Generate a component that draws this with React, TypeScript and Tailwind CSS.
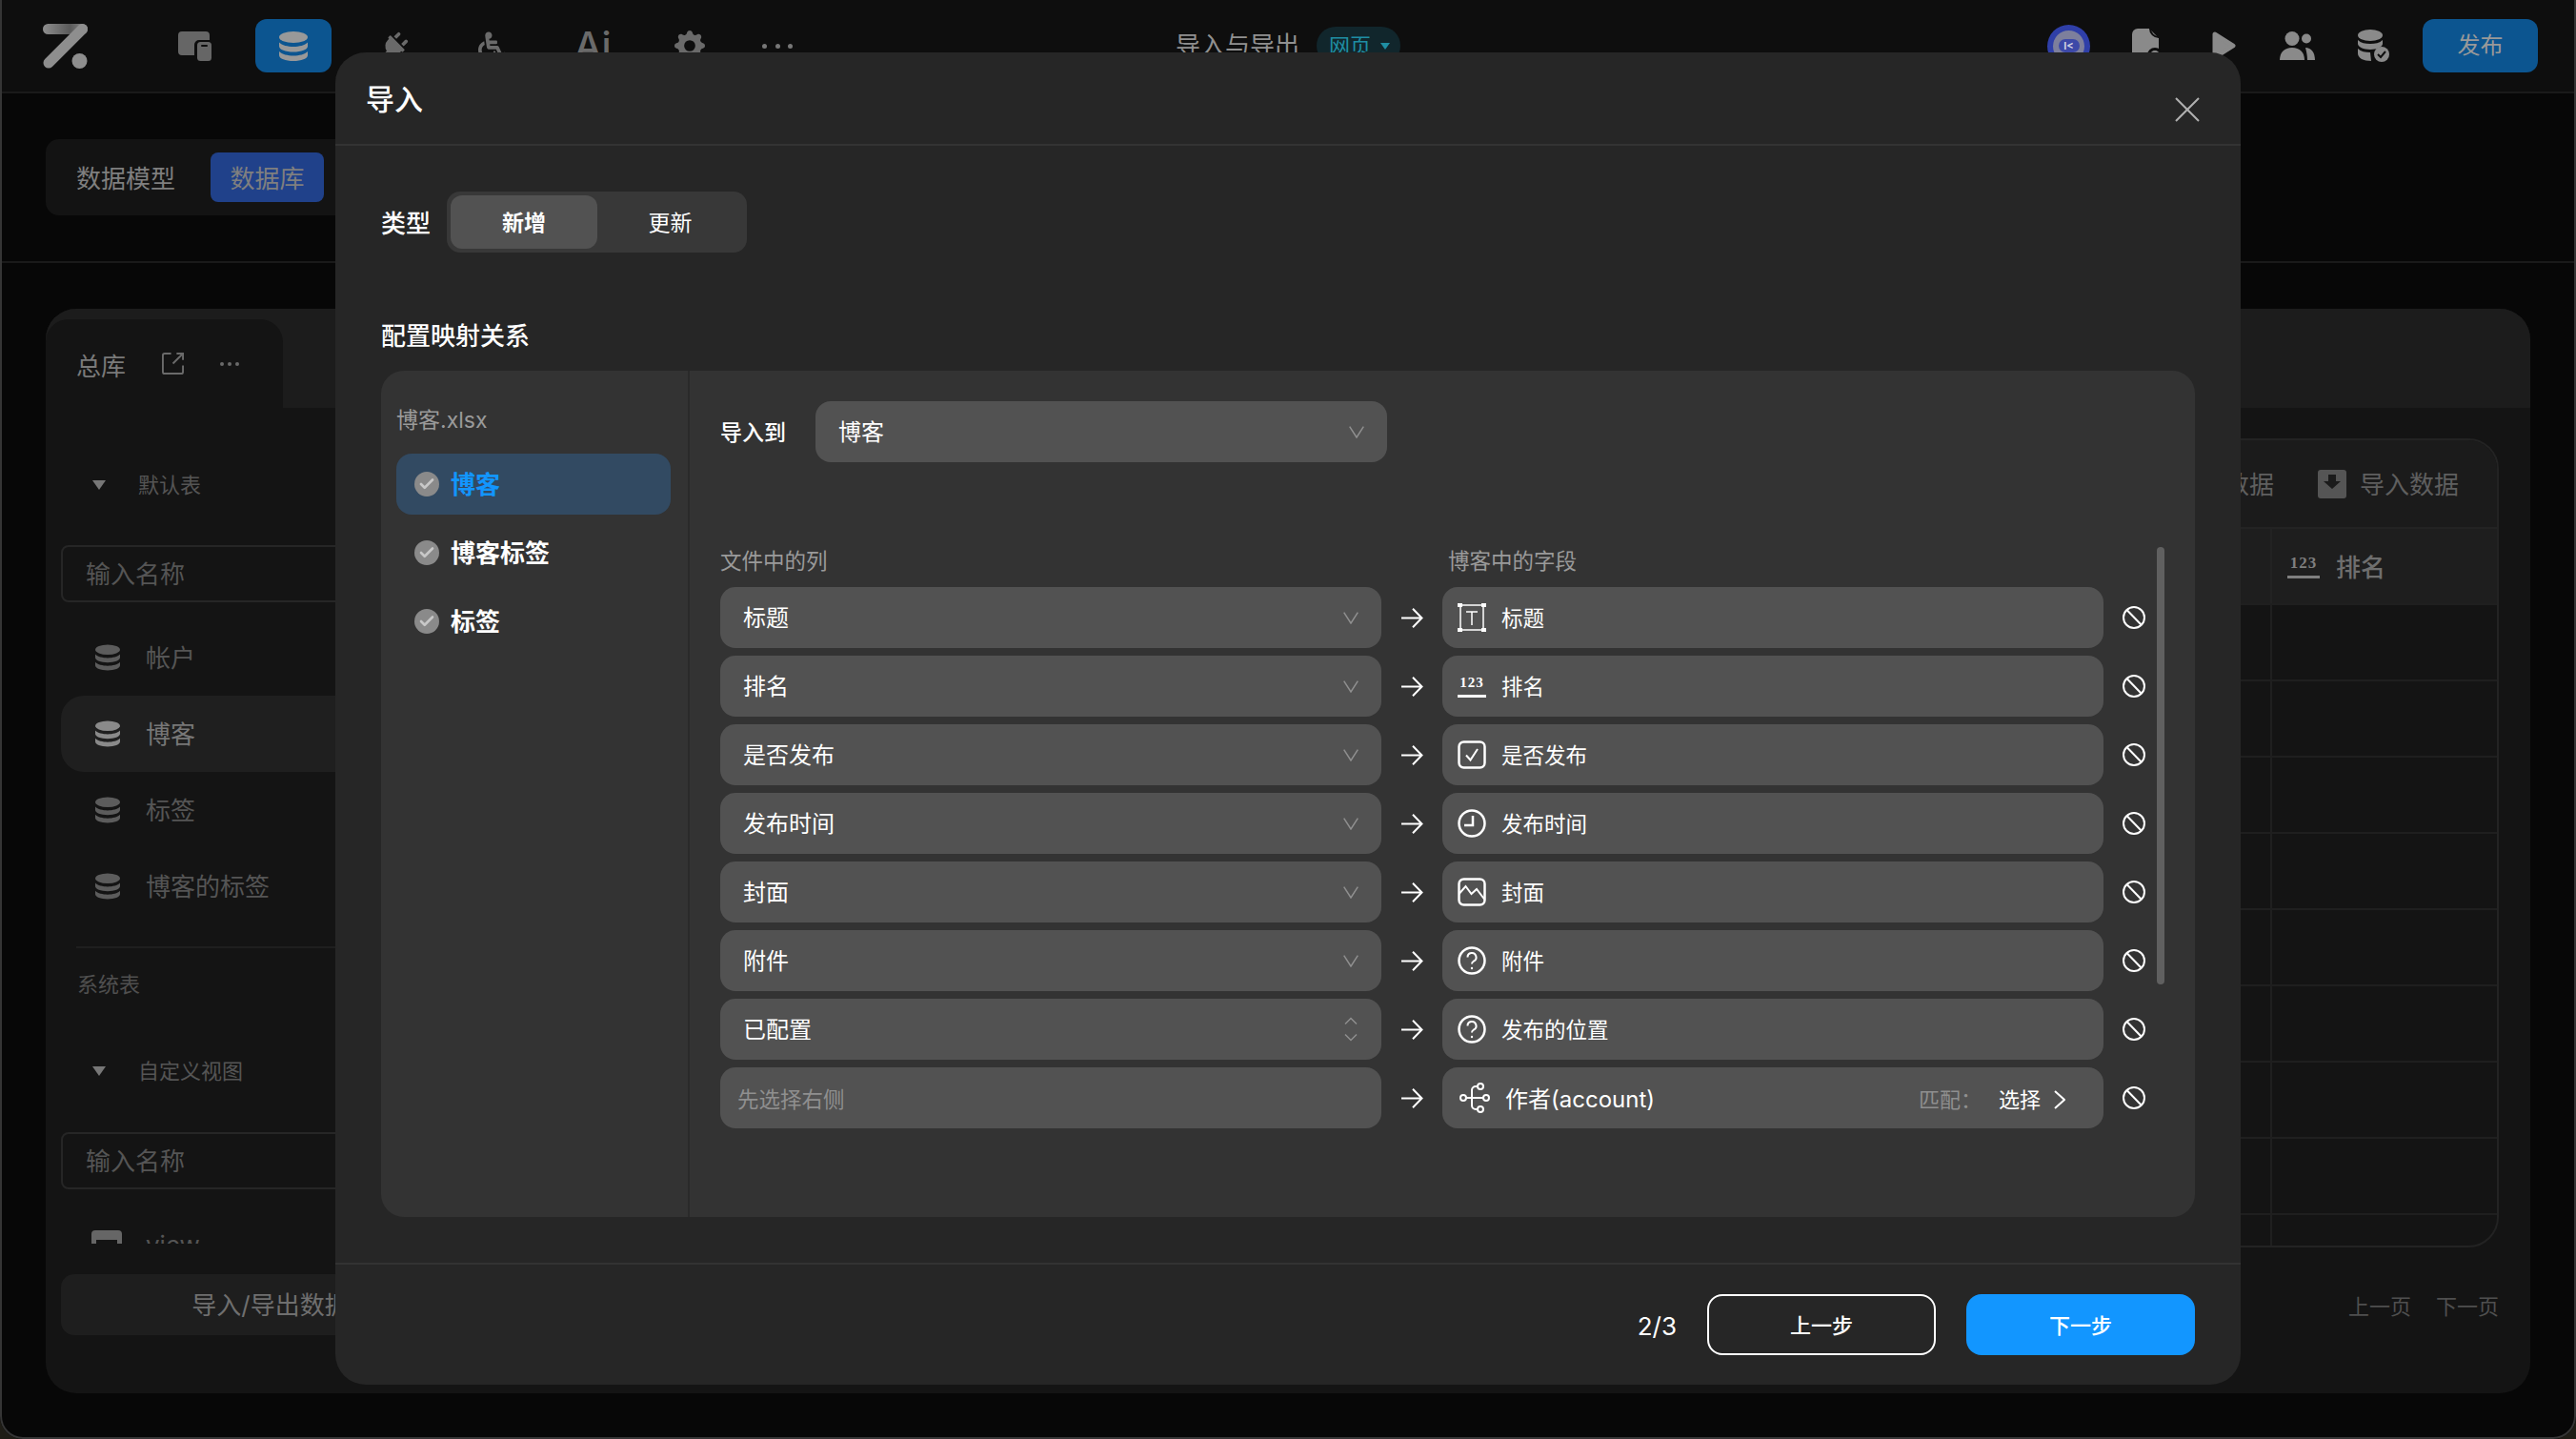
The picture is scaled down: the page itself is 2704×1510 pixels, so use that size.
import { Check } from "lucide-react";
import { BsGearFill } from "react-icons/bs";
import { FaPlug, FaWheelchair } from "react-icons/fa";

const font = "font-['Inter','Noto_Sans_CJK_SC',sans-serif]";

function Logo() {
	return (
		<svg width="47" height="47" viewBox="0 0 47 47" className="shrink-0">
			<defs>
				<linearGradient id="logoTop" gradientUnits="userSpaceOnUse" x1="0" x2="47" y1="0" y2="0">
					<stop offset="0" stopColor="#8e8e8e" />
					<stop offset="0.6" stopColor="#5a5a5a" />
					<stop offset="1" stopColor="#8e8e8e" />
				</linearGradient>
			</defs>
			<path d="M5.500 5.500H41.500" stroke="url(#logoTop)" strokeWidth="11" strokeLinecap="round" />
			<path d="M41.500 5.500L6 41" stroke="#8e8e8e" strokeWidth="11" strokeLinecap="round" />
			<circle cx="38.500" cy="39" r="8" fill="#8e8e8e" />
		</svg>
	);
}

function DevicesIcon() {
	return (
		<svg width="35" height="31" viewBox="0 0 35 31" className="shrink-0">
			<path d="M4 0H29a4 4 0 0 1 4 4v5H22a5 5 0 0 0-5 5v11H4a4 4 0 0 1-4-4V4a4 4 0 0 1 4-4z" fill="#666" />
			<rect x="20" y="11" width="15" height="20" rx="3.500" fill="#666" />
			<rect x="24" y="14" width="7" height="2" rx="1" fill="#0e0e0e" />
		</svg>
	);
}

function DbIcon({ className, fill }: { className?: string; fill: string }) {
	return (
		<svg viewBox="0 0 30 31" className={className} fill={fill}>
			<ellipse cx="15" cy="6" rx="15" ry="6" />
			<path d="M0 11.500c3 3 9 4.500 15 4.500s12-1.500 15-4.500v4c0 3.500-6.700 6-15 6s-15-2.500-15-6z" />
			<path d="M0 21c3 3 9 4.500 15 4.500S27 24 30 21v4c0 3.500-6.700 6-15 6S0 28.500 0 25z" />
		</svg>
	);
}

function Avatar() {
	return (
		<div className="w-[45px] h-[45px] shrink-0 rounded-full bg-[#2f3fa8] flex items-center justify-center">
			<div className="w-[33px] h-[33px] rounded-full bg-[#7d7f9c] flex items-center justify-center">
				<div className="w-[22px] h-[14px] rounded-full bg-[#3d49a8] text-[#d0d0e0] text-[11px] leading-[14px] text-center font-bold">
					I&lt;
				</div>
			</div>
		</div>
	);
}

function DocGearIcon() {
	return (
		<svg width="30" height="36" viewBox="0 0 30 36" className="shrink-0">
			<path d="M6 0H18L28 10V36H6a6 6 0 0 1-6-6V6a6 6 0 0 1 6-6z" fill="#8a8a8a" />
			<path d="M19 0a9 9 0 0 0 9 9" stroke="#0e0e0e" strokeWidth="2" fill="none" />
			<circle cx="24" cy="28" r="8" fill="#0e0e0e" />
			<circle cx="24" cy="28" r="5" fill="#8a8a8a" />
		</svg>
	);
}

function PlayIcon() {
	return (
		<svg width="25" height="30" viewBox="0 0 25 30" className="shrink-0">
			<path d="M3 3L22 15L3 27z" fill="#8a8a8a" stroke="#8a8a8a" strokeWidth="5" strokeLinejoin="round" />
		</svg>
	);
}

function UsersIcon() {
	return (
		<svg width="37" height="30" viewBox="0 0 37 30" className="shrink-0" fill="#8a8a8a">
			<circle cx="13" cy="7.500" r="7.500" />
			<path d="M0 30c0-8 5-13 13-13s13 5 13 13z" />
			<circle cx="28" cy="7.500" r="5" />
			<path d="M27 17c6 0 10 5 10 13h-8c0-5-1-9-2-13z" />
		</svg>
	);
}

function DbCheckIcon() {
	return (
		<svg width="34" height="35" viewBox="0 0 34 35" className="shrink-0">
			<ellipse cx="14" cy="6" rx="13" ry="6" fill="#8a8a8a" />
			<path d="M1 11c3 3 8 4 13 4s10-1 13-4v4c0 3-6 6-13 6S1 18 1 15z" fill="#8a8a8a" />
			<path d="M1 20c3 3 8 4 13 4l1 9C7 33 1 30 1 25z" fill="#8a8a8a" />
			<circle cx="26" cy="26" r="8" fill="#8a8a8a" />
			<path d="M22 26l3 3 5-6" stroke="#0e0e0e" strokeWidth="2" fill="none" />
		</svg>
	);
}

function TopBar() {
	return (
		<div className="h-[98px] shrink-0 border-b-2 border-[#1a1a1a] bg-[#0e0e0e] flex items-center pl-[45px] pr-[40px]">
			<Logo />
			<div className="ml-[95px]">
				<DevicesIcon />
			</div>
			<div className="ml-[46px] w-[80px] h-[56px] rounded-[12px] bg-[#0c5590] flex items-center justify-center">
				<DbIcon className="w-[30px] h-[31px]" fill="#999" />
			</div>
			<FaPlug className="ml-[51px] w-[29px] h-[29px] text-[#6a6a6a] rotate-45" />
			<FaWheelchair className="ml-[74px] w-[29px] h-[36px] text-[#6a6a6a]" />
			<span className="ml-[72px] w-[37px] text-[40px] leading-[44px] font-medium text-[#6a6a6a]">Ai</span>
			<BsGearFill className="ml-[68px] w-[32px] h-[32px] text-[#6a6a6a]" />
			<div className="ml-[60px] w-[32px] flex justify-between">
				<span className="w-[5px] h-[5px] rounded-full bg-[#777]" />
				<span className="w-[5px] h-[5px] rounded-full bg-[#777]" />
				<span className="w-[5px] h-[5px] rounded-full bg-[#777]" />
			</div>
			<span className="ml-[402px] text-[26px] leading-[36px] text-[#909090]">导入与导出</span>
			<div className="ml-[18px] w-[88px] h-[40px] rounded-full bg-[#11262c] flex items-center pl-[13px] gap-[10px] text-[#1f8ea3]">
				<span className="text-[22px] leading-[30px]">网页</span>
				<span className="w-0 h-0 border-x-[5px] border-x-transparent border-t-[7px] border-t-[#1f8ea3]" />
			</div>
			<div className="ml-auto flex items-center">
				<Avatar />
				<div className="ml-[44px]">
					<DocGearIcon />
				</div>
				<div className="ml-[54px]">
					<PlayIcon />
				</div>
				<div className="ml-[46px]">
					<UsersIcon />
				</div>
				<div className="ml-[44px]">
					<DbCheckIcon />
				</div>
				<div className="ml-[35px] w-[121px] h-[56px] rounded-[12px] bg-[#0c5590] text-[#999] text-[24px] flex items-center justify-center">
					发布
				</div>
			</div>
		</div>
	);
}

function ModeBar() {
	return (
		<div className="h-[178px] shrink-0 border-b-2 border-[#1a1a1a] bg-[#070707] pl-[48px] pt-[48px]">
			<div className="w-[340px] h-[80px] rounded-[14px] bg-[#131313] flex items-center pl-[32px]">
				<span className="text-[26px] text-[#7f7f7f] pt-[2px]">数据模型</span>
				<span className="ml-[37px] w-[119px] h-[52px] rounded-[8px] bg-[#20418a] text-[26px] text-[#7f7f7f] flex items-center justify-center pt-[2px]">
					数据库
				</span>
			</div>
		</div>
	);
}

function Triangle() {
	return <span className="w-0 h-0 border-x-[7px] border-x-transparent border-t-[10px] border-t-[#777]" />;
}

function SideGroup({ label }: { label: string }) {
	return (
		<div className="h-[80px] flex items-center pl-[33px] gap-[34px]">
			<Triangle />
			<span className="text-[22px] text-[#555]">{label}</span>
		</div>
	);
}

function SideInput() {
	return (
		<div className="h-[60px] w-[500px] rounded-[8px] border-2 border-[#262626] flex items-center pl-[24px] text-[26px] text-[#555]">
			输入名称
		</div>
	);
}

function SideItem({ label, active }: { label: string; active?: boolean }) {
	return (
		<div className={`h-[80px] w-[500px] rounded-[24px] flex items-center pl-[36px] gap-[27px] ${active ? "bg-[#1f1f1f]" : ""}`}>
			<DbIcon className="w-[26px] h-[32px]" fill={active ? "#8a8a8a" : "#5c5c5c"} />
			<span className={`text-[26px] ${active ? "text-[#777]" : "text-[#555]"}`}>{label}</span>
		</div>
	);
}

function Sidebar() {
	return (
		<div className="w-[520px] shrink-0 pl-[16px] pt-[41px] flex flex-col">
			<SideGroup label="默认表" />
			<div className="mt-[23px]">
				<SideInput />
			</div>
			<div className="mt-[18px]">
				<SideItem label="帐户" />
				<SideItem label="博客" active />
				<SideItem label="标签" />
				<SideItem label="博客的标签" />
			</div>
			<div className="mt-[23px] ml-[16px] h-[2px] w-[480px] bg-[#1f1f1f]" />
			<div className="mt-[21px] ml-[17px] h-[34px] text-[22px] leading-[34px] text-[#4f4f4f]">系统表</div>
			<div className="mt-[34px]">
				<SideGroup label="自定义视图" />
			</div>
			<div className="mt-[24px]">
				<SideInput />
			</div>
			<div className="h-[57px] overflow-hidden pt-[18px]">
				<div className="h-[80px] flex items-center pl-[32px] gap-[25px]">
					<div className="w-[32px] h-[30px] rounded-[4px] bg-[#666] flex items-start justify-center pt-[10px]">
						<div className="w-[22px] h-[6px] bg-[#141414]" />
					</div>
					<span className="text-[26px] text-[#555]">view</span>
				</div>
			</div>
			<div className="mt-[32px] h-[64px] w-[440px] rounded-[14px] bg-[#1e1e1e] flex items-center justify-center text-[26px] text-[#6f6f6f]">
				导入/导出数据
			</div>
		</div>
	);
}

function Num123({ color, size, w }: { color: string; size: number; w: string }) {
	return (
		<div className={`${w} shrink-0 flex flex-col items-center`}>
			<span
				className="font-['Liberation_Serif',serif] font-bold leading-none tracking-[1px]"
				style={{ color, fontSize: size }}
			>
				123
			</span>
			<span className="mt-[5px] h-[3px] w-full" style={{ background: color }} />
		</div>
	);
}

function TableArea() {
	const rows = [0, 1, 2, 3, 4, 5, 6, 7, 8];
	return (
		<div className="flex-1 flex flex-col pt-[32px] pr-[33px]">
			<div className="h-[849px] rounded-[32px] border-2 border-[#232323] bg-[#141414] overflow-hidden flex flex-col">
				<div className="h-[91px] shrink-0 bg-[#1b1b1b] flex items-center justify-end pr-[40px] text-[26px] text-[#5f5f5f]">
					<span className="pt-[2px]">导出数据</span>
					<svg width="30" height="30" viewBox="0 0 30 30" className="ml-[46px]">
						<rect width="30" height="30" rx="3" fill="#555" />
						<path d="M11 5h8v7h5l-9 8-9-8h5z" fill="#1b1b1b" />
					</svg>
					<span className="ml-[14px] pt-[2px]">导入数据</span>
				</div>
				<div className="h-[80px] shrink-0 border-t-2 border-[#232323] bg-[#1e1e1e] flex">
					<div className="flex-1" />
					<div className="w-[238px] border-l-2 border-[#232323] flex items-center pl-[16px] gap-[17px]">
						<Num123 color="#7f7f7f" size={17} w="w-[34px]" />
						<span className="text-[26px] font-medium text-[#6f6f6f] pt-[2px]">排名</span>
					</div>
				</div>
				{rows.map((r) => (
					<div key={r} className="h-[80px] shrink-0 border-t-2 border-[#1f1f1f] flex first-of-type:border-t-0">
						<div className="flex-1" />
						<div className="w-[238px] border-l-2 border-[#1f1f1f]" />
					</div>
				))}
			</div>
			<div className="mt-[46px] flex justify-end gap-[26px] text-[22px] leading-[32px] text-[#4f4f4f]">
				<span>上一页</span>
				<span>下一页</span>
			</div>
		</div>
	);
}

function Card() {
	return (
		<div className="flex-1 px-[48px] pt-[48px] pb-[48px] bg-[#070707] flex">
			<div className="flex-1 rounded-[32px] overflow-hidden bg-[#141414] flex flex-col">
				<div className="h-[104px] shrink-0 bg-[#1c1c1c] pt-[11px]">
					<div className="w-[249px] h-[93px] rounded-t-[24px] bg-[#141414] flex items-center pl-[32px] text-[#7a7a7a]">
						<span className="text-[26px] pt-[6px]">总库</span>
						<svg width="23" height="25" viewBox="0 0 24 26" className="ml-[38px]" fill="none" stroke="#6a6a6a" strokeWidth="2">
							<path d="M10 2H3a2 2 0 0 0-2 2v18a2 2 0 0 0 2 2h18a2 2 0 0 0 2-2v-7" />
							<path d="M12 13L23 2M16 2h7v7" />
						</svg>
						<span className="ml-[38px] flex gap-[4px]">
							<span className="w-[4px] h-[4px] rounded-full bg-[#6a6a6a]" />
							<span className="w-[4px] h-[4px] rounded-full bg-[#6a6a6a]" />
							<span className="w-[4px] h-[4px] rounded-full bg-[#6a6a6a]" />
						</span>
					</div>
				</div>
				<div className="flex-1 flex min-h-0">
					<Sidebar />
					<TableArea />
				</div>
			</div>
		</div>
	);
}

function Chevron() {
	return (
		<svg width="16" height="13" viewBox="0 0 16 13" fill="none" stroke="#8f8f8f" strokeWidth="1.500">
			<path d="M0.700 0.700L8 12L15.300 0.700" />
		</svg>
	);
}

function UpDown() {
	return (
		<svg width="14" height="26" viewBox="0 0 14 26" fill="none" stroke="#8f8f8f" strokeWidth="1.500" className="mr-[1px]">
			<path d="M1 7.500L7 1.500L13 7.500M1 18.500L7 24.500L13 18.500" />
		</svg>
	);
}

function ArrowIcon() {
	return (
		<svg width="23" height="21" viewBox="0 0 23 21" fill="none" stroke="#fff" strokeWidth="2">
			<path d="M0 10.500H21M12 0.700L21.500 10.500L12 20.300" />
		</svg>
	);
}

function BanIcon() {
	return (
		<svg width="24" height="24" viewBox="0 0 24 24" fill="none" stroke="#fff" strokeWidth="2" className="shrink-0">
			<circle cx="12" cy="12" r="11" />
			<path d="M4.500 4L20 20" />
		</svg>
	);
}

function TextIcon() {
	return (
		<svg width="30" height="30" viewBox="0 0 30 30" fill="none" stroke="#fff" strokeWidth="1.500" className="shrink-0">
			<path d="M3 2H27V28H3zM9 9H21M15 9V23" />
			<path d="M0 0h5v4H0zM25 0h5v4h-5zM0 26h5v4H0zM25 26h5v4h-5z" fill="#fff" stroke="none" />
		</svg>
	);
}

function CheckIcon() {
	return (
		<svg width="30" height="30" viewBox="0 0 30 30" fill="none" stroke="#fff" strokeWidth="2.500" className="shrink-0">
			<rect x="1.500" y="1.500" width="27" height="27" rx="5" />
			<path d="M9 15.500L13.500 20.500L21 9" strokeWidth="2" />
		</svg>
	);
}

function ClockIcon() {
	return (
		<svg width="30" height="30" viewBox="0 0 30 30" fill="none" stroke="#fff" strokeWidth="2.500" className="shrink-0">
			<circle cx="15" cy="15" r="13.500" />
			<path d="M16 7V17H7" />
		</svg>
	);
}

function ImageIcon() {
	return (
		<svg width="30" height="30" viewBox="0 0 30 30" fill="none" stroke="#fff" strokeWidth="2.500" className="shrink-0">
			<rect x="1.500" y="1.500" width="27" height="27" rx="5" />
			<path d="M1.500 17L8.500 9L14.500 17L20 12L28.500 23" strokeWidth="2" />
		</svg>
	);
}

function QuestionIcon() {
	return (
		<svg width="30" height="30" viewBox="0 0 30 30" fill="none" stroke="#fff" strokeWidth="2.500" className="shrink-0">
			<circle cx="15" cy="15" r="13.500" />
			<path d="M10.500 11.500a4.500 4.500 0 1 1 6.500 4c-1.300.8-2 1.500-2 3" strokeWidth="2" />
			<circle cx="15" cy="23" r="1.200" fill="#fff" stroke="none" />
		</svg>
	);
}

function RelationIcon() {
	return (
		<svg width="32" height="32" viewBox="0 0 32 32" fill="none" stroke="#fff" strokeWidth="2" className="shrink-0">
			<circle cx="4" cy="16" r="3" />
			<circle cx="22" cy="4" r="3" />
			<circle cx="28" cy="16" r="3" />
			<circle cx="22" cy="28" r="3" />
			<path d="M7 16H25M13 16V8a4 4 0 0 1 4-4h2M13 16V24a4 4 0 0 0 4 4h2" />
		</svg>
	);
}

const mappings = [
	{ col: "标题", field: "标题", icon: <TextIcon /> },
	{ col: "排名", field: "排名", icon: <Num123 color="#fff" size={15} w="w-[30px]" /> },
	{ col: "是否发布", field: "是否发布", icon: <CheckIcon /> },
	{ col: "发布时间", field: "发布时间", icon: <ClockIcon /> },
	{ col: "封面", field: "封面", icon: <ImageIcon /> },
	{ col: "附件", field: "附件", icon: <QuestionIcon /> },
	{ col: "已配置", field: "发布的位置", icon: <QuestionIcon />, updown: true },
];

function MapRow({ left, right }: { left: React.ReactNode; right: React.ReactNode }) {
	return (
		<div className="flex items-center h-[64px]">
			{left}
			<div className="w-[64px] shrink-0 flex items-center justify-center">
				<ArrowIcon />
			</div>
			{right}
			<div className="ml-[20px]">
				<BanIcon />
			</div>
		</div>
	);
}

function SheetItem({ label, active }: { label: string; active?: boolean }) {
	return (
		<div className={`h-[64px] rounded-[16px] flex items-center pl-[19px] gap-[12px] ${active ? "bg-[#324a62]" : ""}`}>
			<span className="w-[26px] h-[26px] rounded-full bg-[#8a8a8a] flex items-center justify-center">
				<Check className="w-[18px] h-[18px] text-[#c8c8c8]" strokeWidth={3.500} />
			</span>
			<span className={`text-[26px] font-semibold ${active ? "text-[#1296ff]" : "text-white"}`}>{label}</span>
		</div>
	);
}

function Modal() {
	return (
		<div className="absolute left-[352px] top-[55px] w-[2000px] h-[1398px] rounded-[32px] bg-[#262626] flex flex-col text-white">
			<div className="h-[98px] shrink-0 border-b-2 border-[#333] flex items-center justify-between pl-[32px] pr-[43px]">
				<span className="text-[30px] font-medium leading-[40px] pt-[2px]">导入</span>
				<svg width="26" height="26" viewBox="0 0 26 26" fill="none" stroke="#b0b0b0" strokeWidth="2" className="mt-[24px]">
					<path d="M1 1L25 25M25 1L1 25" />
				</svg>
			</div>
			<div className="flex-1 px-[48px] pt-[48px] flex flex-col">
				<div className="flex items-center gap-[17px]">
					<span className="text-[26px] font-medium pt-[2px]">类型</span>
					<div className="w-[315px] h-[64px] rounded-[14px] bg-[#383838] p-[4px] flex">
						<span className="w-[154px] pt-[2px] rounded-[12px] bg-[#525252] flex items-center justify-center text-[23px] font-semibold">新增</span>
						<span className="w-[153px] pt-[2px] flex items-center justify-center text-[23px]">更新</span>
					</div>
				</div>
				<div className="mt-[70px] mb-[18px] text-[26px] leading-[36px] font-medium">配置映射关系</div>
				<div className="h-[888px] rounded-[24px] bg-[#333] flex">
					<div className="w-[324px] shrink-0 border-r-2 border-[#2a2a2a] pl-[16px] pr-[18px] pt-[34px] flex flex-col">
						<div className="text-[23px] leading-[34px] text-[#9a9a9a] mb-[18px] pt-[1px]">博客.xlsx</div>
						<div className="flex flex-col gap-[8px]">
							<SheetItem label="博客" active />
							<SheetItem label="博客标签" />
							<SheetItem label="标签" />
						</div>
					</div>
					<div className="relative flex-1 pl-[32px] pt-[32px]">
						<div className="flex items-center">
							<span className="text-[23px] font-medium w-[100px] pt-[2px]">导入到</span>
							<div className="w-[600px] h-[64px] rounded-[16px] bg-[#525252] flex items-center justify-between pl-[24px] pr-[24px]">
								<span className="text-[24px] pt-[1px]">博客</span>
								<Chevron />
							</div>
						</div>
						<div className="mt-[87px] mb-[11px] flex text-[22.500px] leading-[32px] text-[#9a9a9a]">
							<span className="w-[764px] pt-[1px]">文件中的列</span>
							<span className="pt-[1px]">博客中的字段</span>
						</div>
						<div className="flex flex-col gap-[8px]">
							{mappings.map((m) => (
								<MapRow
									key={m.field}
									left={
										<div className="w-[694px] h-[64px] rounded-[16px] bg-[#525252] flex items-center justify-between pl-[24px] pr-[24px]">
											<span className="text-[24px] pt-[2px]">{m.col}</span>
											{m.updown ? <UpDown /> : <Chevron />}
										</div>
									}
									right={
										<div className="w-[694px] h-[64px] rounded-[16px] bg-[#525252] flex items-center pl-[16px] gap-[16px]">
											{m.icon}
											<span className="text-[22.500px] pt-[2px]">{m.field}</span>
										</div>
									}
								/>
							))}
							<MapRow
								left={
									<div className="w-[694px] h-[64px] rounded-[16px] bg-[#525252] flex items-center pl-[18px] pt-[4px] text-[22.500px] text-[#8f8f8f]">
										先选择右侧
									</div>
								}
								right={
									<div className="w-[694px] h-[64px] rounded-[16px] bg-[#525252] flex items-center pl-[18px]">
										<RelationIcon />
										<span className="ml-[16px] text-[24px] pt-[4px]">作者(account)</span>
										<span className="ml-auto text-[22px] text-[#8f8f8f] pt-[4px]">匹配：</span>
										<span className="ml-[18px] text-[22px] pt-[4px]">选择</span>
										<svg width="12" height="20" viewBox="0 0 12 20" fill="none" stroke="#fff" strokeWidth="2" className="ml-[14px] mr-[40px] mt-[3px]">
											<path d="M1 1L11 10L1 19" />
										</svg>
									</div>
								}
							/>
						</div>
						<div className="absolute left-[1540px] top-[185px] w-[8px] h-[459px] rounded-full bg-[#606060]" />
					</div>
				</div>
			</div>
			<div className="h-[128px] shrink-0 border-t-2 border-[#333] flex items-center justify-end pr-[48px]">
				<span className="text-[26px] mr-[32px] pt-[2px]">2/3</span>
				<div className="w-[240px] h-[64px] rounded-[16px] border-2 border-white flex items-center justify-center text-[22px] font-medium pt-[2px]">上一步</div>
				<div className="ml-[32px] w-[240px] h-[64px] rounded-[16px] bg-[#1296ff] flex items-center justify-center text-[22px] font-medium pt-[2px]">下一步</div>
			</div>
		</div>
	);
}

export default function App() {
	return (
		<div className={`relative w-[2704px] h-[1510px] overflow-hidden bg-[#1f1d16] ${font}`}>
			<div className="w-full h-full rounded-b-[24px] overflow-hidden flex flex-col bg-[#070707]">
				<TopBar />
				<ModeBar />
				<Card />
			</div>
			<Modal />
			<div className="absolute inset-0 rounded-b-[24px] border-x-2 border-b-2 border-[#353535] pointer-events-none" />
		</div>
	);
}
